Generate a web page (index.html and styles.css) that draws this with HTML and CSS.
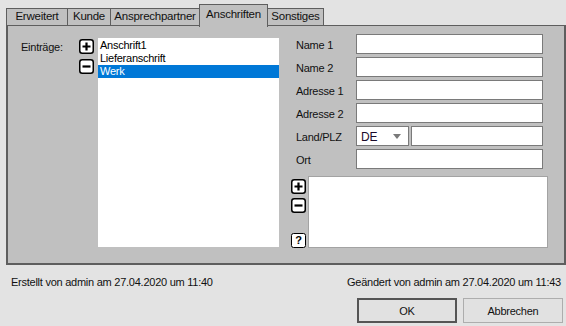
FILE: index.html
```html
<!DOCTYPE html>
<html lang="de">
<head>
<meta charset="utf-8">
<title>Anschriften</title>
<link rel="stylesheet" href="styles.css">
</head>
<body>
<div class="dialog">
  <div class="tabs">
    <div class="tab t-erw">Erweitert</div>
    <div class="tab t-kun">Kunde</div>
    <div class="tab t-ans">Ansprechpartner</div>
    <div class="tab t-adr active">Anschriften</div>
    <div class="tab t-son">Sonstiges</div>
  </div>
  <div class="panel">
    <div class="left">
      <div class="entries-label">Einträge:</div>
      <div class="tool-col">
        <span class="ibtn"><svg width="15" height="15" viewBox="0 0 15 15"><rect x="0.75" y="0.75" width="13.5" height="13.5" rx="2.5" fill="#fff" stroke="#000" stroke-width="1.5"/><path d="M3.5 7.5H11.5M7.5 3.5V11.5" stroke="#000" stroke-width="2.2"/></svg></span>
        <span class="ibtn"><svg width="15" height="15" viewBox="0 0 15 15"><rect x="0.75" y="0.75" width="13.5" height="13.5" rx="2.5" fill="#fff" stroke="#000" stroke-width="1.5"/><path d="M3.5 7.5H11.5" stroke="#000" stroke-width="2.2"/></svg></span>
      </div>
      <ul class="list">
        <li>Anschrift1</li>
        <li>Lieferanschrift</li>
        <li class="sel">Werk</li>
      </ul>
    </div>
    <div class="right">
      <div class="row"><label class="lbl">Name 1</label><div class="inp"></div></div>
      <div class="row"><label class="lbl">Name 2</label><div class="inp"></div></div>
      <div class="row"><label class="lbl">Adresse 1</label><div class="inp"></div></div>
      <div class="row"><label class="lbl">Adresse 2</label><div class="inp"></div></div>
      <div class="row"><label class="lbl">Land/PLZ</label>
        <div class="combo"><span class="combo-val">DE</span><svg class="arrow" width="8" height="5" viewBox="0 0 8 5"><path d="M0 0H8L4 5Z" fill="#7a7a7a"/></svg></div>
        <div class="inp plz"></div>
      </div>
      <div class="row"><label class="lbl">Ort</label><div class="inp"></div></div>
      <div class="notes">
        <div class="tool-col2">
          <span class="ibtn"><svg width="15" height="15" viewBox="0 0 15 15"><rect x="0.75" y="0.75" width="13.5" height="13.5" rx="2.5" fill="#fff" stroke="#000" stroke-width="1.5"/><path d="M3.5 7.5H11.5M7.5 3.5V11.5" stroke="#000" stroke-width="2.2"/></svg></span>
          <span class="ibtn"><svg width="15" height="15" viewBox="0 0 15 15"><rect x="0.75" y="0.75" width="13.5" height="13.5" rx="2.5" fill="#fff" stroke="#000" stroke-width="1.5"/><path d="M3.5 7.5H11.5" stroke="#000" stroke-width="2.2"/></svg></span>
          <span class="qbtn">?</span>
        </div>
        <div class="notes-box"></div>
      </div>
    </div>
  </div>
  <div class="footer">
    <span>Erstellt von admin am 27.04.2020 um 11:40</span>
    <span>Geändert von admin am 27.04.2020 um 11:43</span>
  </div>
  <div class="buttons">
    <button class="btn default">OK</button>
    <button class="btn">Abbrechen</button>
  </div>
</div>
</body>
</html>
```
FILE: styles.css
```css
html, body {
  margin: 0;
  padding: 0;
}
body {
  background: #e3e3e3;
  font-family: "Liberation Sans", Arial, sans-serif;
  font-size: 11px;
  letter-spacing: -0.25px;
  color: #111;
}
.dialog {
  width: 566px;
  height: 326px;
  box-sizing: border-box;
  padding: 4px 0 0 6px;
}
.tabs {
  display: flex;
  align-items: flex-end;
  height: 21px;
}
.tab {
  box-sizing: border-box;
  height: 17px;
  border: 1px solid #5e5e5e;
  border-bottom: none;
  background: #c0c0c0;
  text-align: center;
  line-height: 15px;
  font-size: 11.5px;
  color: #111;
}
.tab + .tab { margin-left: -1px; }
.t-erw { width: 62px; }
.t-kun { width: 44px; }
.t-ans { width: 90px; }
.t-adr { width: 69px; }
.t-son { width: 57px; }
.tab.active {
  height: 23px;
  margin-bottom: -2px;
  position: relative;
  z-index: 1;
  line-height: 18px;
  padding-bottom: 2px;
}
.panel {
  box-sizing: border-box;
  width: 560px;
  height: 240px;
  background: #c0c0c0;
  border: 2px solid #5e5e5e;
  border-top-width: 1px;
  display: flex;
  align-items: flex-start;
}
.left {
  display: flex;
  margin: 12px 0 0 13px;
}
.entries-label {
  width: 58px;
  padding-top: 3px;
  line-height: 13px;
}
.tool-col {
  width: 19px;
  display: flex;
  flex-direction: column;
  gap: 5px;
  padding-top: 1px;
}
.ibtn {
  display: block;
  width: 15px;
  height: 15px;
}
.ibtn svg { display: block; }
.list {
  list-style: none;
  margin: 0;
  padding: 1px 0 0 0;
  width: 181px;
  height: 209px;
  box-sizing: border-box;
  background: #fff;
}
.list li {
  height: 13px;
  line-height: 13px;
  padding-left: 2px;
  color: #000;
}
.list li.sel {
  background: #0078d7;
  color: #fff;
}
.right {
  margin: 8px 0 0 12px;
  width: 257px;
  display: flex;
  flex-direction: column;
  gap: 3px;
}
.row {
  display: flex;
  align-items: center;
  height: 20px;
}
.lbl {
  width: 65px;
  box-sizing: border-box;
  padding-left: 5px;
  padding-top: 2px;
  color: #111;
}
.inp {
  box-sizing: border-box;
  width: 187px;
  height: 20px;
  background: #fff;
  border: 1px solid #7a7a7a;
}
.combo {
  box-sizing: border-box;
  width: 53px;
  height: 20px;
  background: #fff;
  border: 1px solid #7a7a7a;
  display: flex;
  align-items: center;
  justify-content: space-between;
  padding: 1px 7px 0 4px;
  margin-right: 2px;
}
.combo-val {
  font-size: 12px;
  color: #1a0a2a;
}
.inp.plz { width: 132px; }
.notes {
  display: flex;
  margin-top: 4px;
}
.tool-col2 {
  width: 17px;
  display: flex;
  flex-direction: column;
  padding-top: 3px;
}
.tool-col2 .ibtn + .ibtn { margin-top: 4px; }
.qbtn {
  box-sizing: border-box;
  display: block;
  width: 15px;
  height: 15px;
  margin-top: 20px;
  border: 1.5px solid #000;
  border-radius: 2.5px;
  background: #fff;
  font-weight: bold;
  font-size: 11px;
  line-height: 12px;
  text-align: center;
  color: #000;
}
.notes-box {
  box-sizing: border-box;
  width: 240px;
  height: 72px;
  background: #fff;
  border: 1px solid #a3a3a3;
}
.footer {
  display: flex;
  justify-content: space-between;
  margin-top: 11px;
  padding: 0 5px 0 5px;
  line-height: 13px;
  color: #111;
}
.buttons {
  display: flex;
  justify-content: flex-end;
  gap: 6px;
  margin-top: 9px;
  padding-right: 3px;
}
.btn {
  box-sizing: border-box;
  width: 100px;
  height: 25px;
  background: #e1e1e1;
  border: 1px solid #adadad;
  font-family: "Liberation Sans", Arial, sans-serif;
  font-size: 11px;
  letter-spacing: -0.25px;
  color: #111;
  padding: 0;
}
.btn.default {
  border: 2px solid #555;
}
```
